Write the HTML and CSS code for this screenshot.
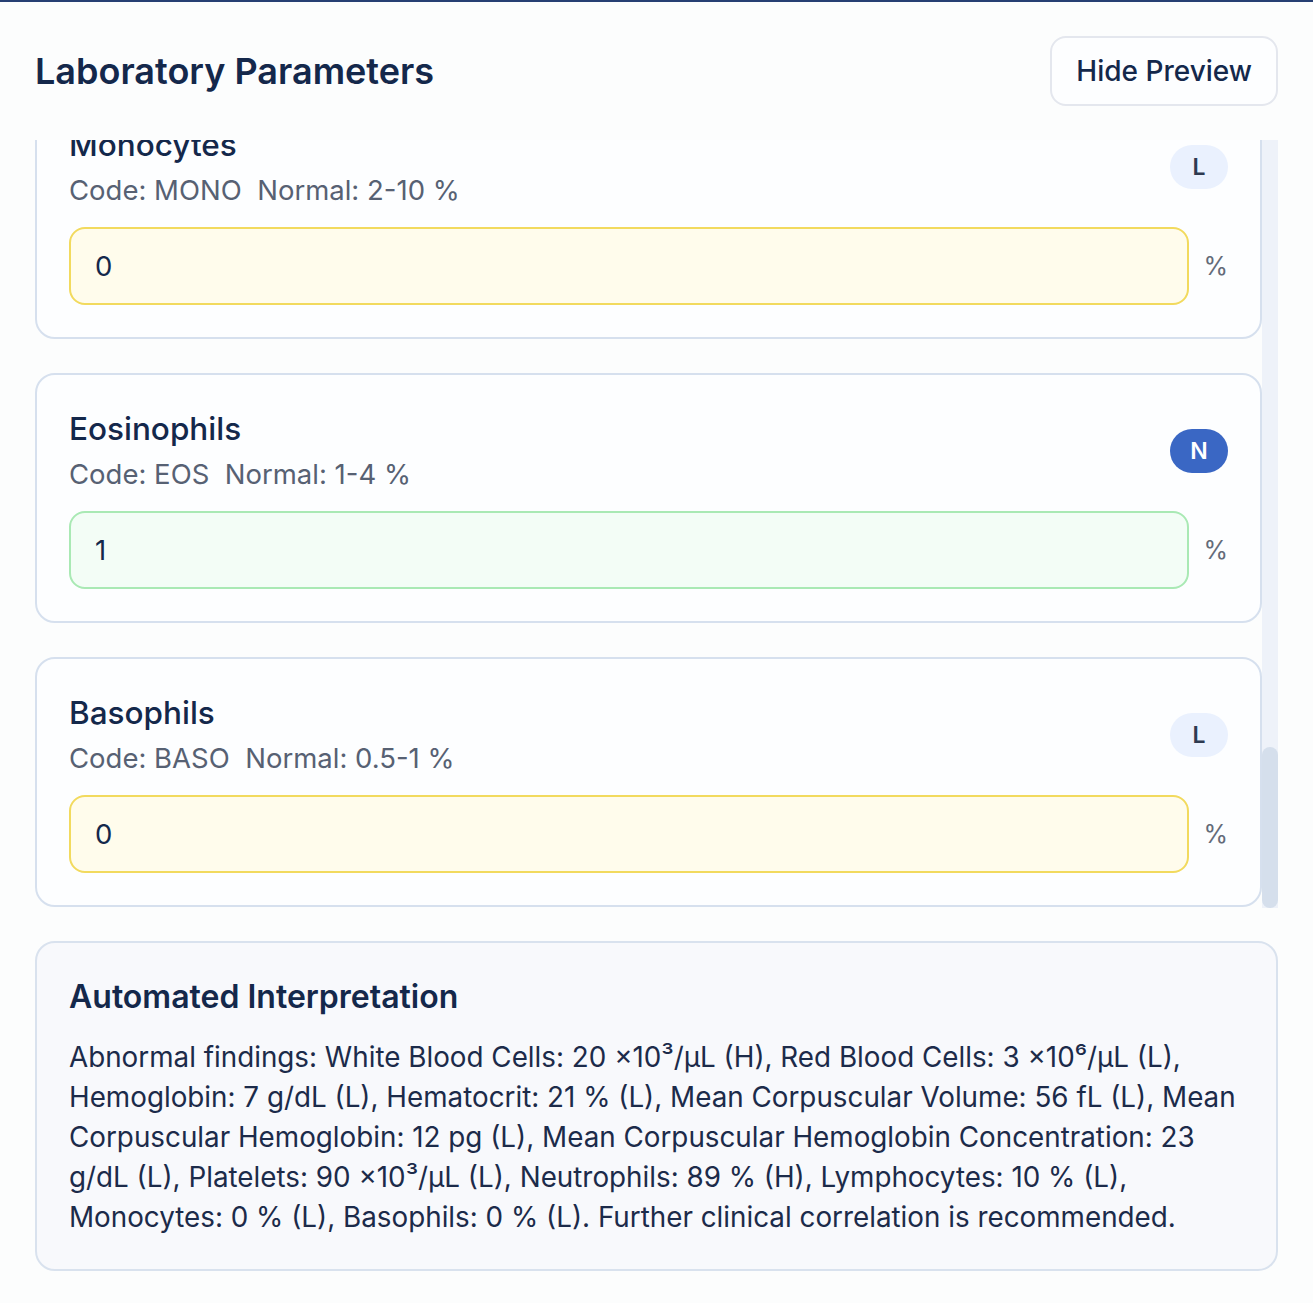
FILE: index.html
```html
<!DOCTYPE html>
<html lang="en">
<head>
<meta charset="utf-8">
<title>Laboratory Parameters</title>
<link rel="stylesheet" href="styles.css">
</head>
<body>
<div class="page">
  <header class="top">
    <h1 class="title">Laboratory Parameters</h1>
    <button class="btn" type="button">Hide Preview</button>
  </header>

  <div class="scroll-frame">
    <div class="scroller">
      <div class="list">
        <section class="card">
          <div class="card-head">
            <div><h2 class="name">White Blood Cells</h2><p class="meta">Code: WBC&nbsp;&nbsp;Normal: 4-11 ×10³/µL</p></div>
            <span class="badge badge-h">H</span>
          </div>
          <div class="field"><input class="inp inp-red" type="text" value="20"><span class="unit">×10³/µL</span></div>
        </section>
        <section class="card">
          <div class="card-head">
            <div><h2 class="name">Red Blood Cells</h2><p class="meta">Code: RBC&nbsp;&nbsp;Normal: 4.2-5.9 ×10⁶/µL</p></div>
            <span class="badge badge-l">L</span>
          </div>
          <div class="field"><input class="inp inp-yellow" type="text" value="3"><span class="unit">×10⁶/µL</span></div>
        </section>
        <section class="card">
          <div class="card-head">
            <div><h2 class="name">Hemoglobin</h2><p class="meta">Code: HGB&nbsp;&nbsp;Normal: 12-17 g/dL</p></div>
            <span class="badge badge-l">L</span>
          </div>
          <div class="field"><input class="inp inp-yellow" type="text" value="7"><span class="unit">g/dL</span></div>
        </section>
        <section class="card">
          <div class="card-head">
            <div><h2 class="name">Hematocrit</h2><p class="meta">Code: HCT&nbsp;&nbsp;Normal: 36-50 %</p></div>
            <span class="badge badge-l">L</span>
          </div>
          <div class="field"><input class="inp inp-yellow" type="text" value="21"><span class="unit">%</span></div>
        </section>
        <section class="card">
          <div class="card-head">
            <div><h2 class="name">Mean Corpuscular Volume</h2><p class="meta">Code: MCV&nbsp;&nbsp;Normal: 80-100 fL</p></div>
            <span class="badge badge-l">L</span>
          </div>
          <div class="field"><input class="inp inp-yellow" type="text" value="56"><span class="unit">fL</span></div>
        </section>
        <section class="card">
          <div class="card-head">
            <div><h2 class="name">Mean Corpuscular Hemoglobin</h2><p class="meta">Code: MCH&nbsp;&nbsp;Normal: 27-33 pg</p></div>
            <span class="badge badge-l">L</span>
          </div>
          <div class="field"><input class="inp inp-yellow" type="text" value="12"><span class="unit">pg</span></div>
        </section>
        <section class="card">
          <div class="card-head">
            <div><h2 class="name">Mean Corpuscular Hemoglobin Concentration</h2><p class="meta">Code: MCHC&nbsp;&nbsp;Normal: 32-36 g/dL</p></div>
            <span class="badge badge-l">L</span>
          </div>
          <div class="field"><input class="inp inp-yellow" type="text" value="23"><span class="unit">g/dL</span></div>
        </section>
        <section class="card">
          <div class="card-head">
            <div><h2 class="name">Platelets</h2><p class="meta">Code: PLT&nbsp;&nbsp;Normal: 150-400 ×10³/µL</p></div>
            <span class="badge badge-l">L</span>
          </div>
          <div class="field"><input class="inp inp-yellow" type="text" value="90"><span class="unit">×10³/µL</span></div>
        </section>
        <section class="card">
          <div class="card-head">
            <div><h2 class="name">Neutrophils</h2><p class="meta">Code: NEUT&nbsp;&nbsp;Normal: 40-75 %</p></div>
            <span class="badge badge-h">H</span>
          </div>
          <div class="field"><input class="inp inp-red" type="text" value="89"><span class="unit">%</span></div>
        </section>
        <section class="card">
          <div class="card-head">
            <div><h2 class="name">Lymphocytes</h2><p class="meta">Code: LYMPH&nbsp;&nbsp;Normal: 20-45 %</p></div>
            <span class="badge badge-l">L</span>
          </div>
          <div class="field"><input class="inp inp-yellow" type="text" value="10"><span class="unit">%</span></div>
        </section>
        <section class="card">
          <div class="card-head">
            <div><h2 class="name">Monocytes</h2><p class="meta">Code: MONO&nbsp;&nbsp;Normal: 2-10 %</p></div>
            <span class="badge badge-l">L</span>
          </div>
          <div class="field"><input class="inp inp-yellow" type="text" value="0"><span class="unit">%</span></div>
        </section>
        <section class="card">
          <div class="card-head">
            <div><h2 class="name">Eosinophils</h2><p class="meta">Code: EOS&nbsp;&nbsp;Normal: 1-4 %</p></div>
            <span class="badge badge-n">N</span>
          </div>
          <div class="field"><input class="inp inp-green" type="text" value="1"><span class="unit">%</span></div>
        </section>
        <section class="card">
          <div class="card-head">
            <div><h2 class="name">Basophils</h2><p class="meta">Code: BASO&nbsp;&nbsp;Normal: 0.5-1 %</p></div>
            <span class="badge badge-l">L</span>
          </div>
          <div class="field"><input class="inp inp-yellow" type="text" value="0"><span class="unit">%</span></div>
        </section>
      </div>
    </div>
    <div class="scrollbar" aria-hidden="true"><div class="thumb"></div></div>
  </div>

  <section class="interp">
    <h2 class="interp-title">Automated Interpretation</h2>
    <p class="interp-text">Abnormal findings: White Blood Cells: 20 ×10³/µL (H), Red Blood Cells: 3 ×10⁶/µL (L), Hemoglobin: 7 g/dL (L), Hematocrit: 21 % (L), Mean Corpuscular Volume: 56 fL (L), Mean Corpuscular Hemoglobin: 12 pg (L), Mean Corpuscular Hemoglobin Concentration: 23 g/dL (L), Platelets: 90 ×10³/µL (L), Neutrophils: 89 % (H), Lymphocytes: 10 % (L), Monocytes: 0 % (L), Basophils: 0 % (L). Further clinical correlation is recommended.</p>
  </section>
</div>
</body>
</html>
```

FILE: styles.css
```css
* { box-sizing: border-box; }

html, body {
  margin: 0;
  padding: 0;
  background: #fcfdfd;
}

body {
  font-family: Inter, "Noto Sans", "Liberation Sans", sans-serif;
  color: #14284b;
  border-top: 2px solid #263f73;
}

.page {
  padding: 0 35px 33px 35px;
}

.top {
  display: flex;
  align-items: center;
  justify-content: space-between;
  padding-top: 34px;
  padding-bottom: 34px;
}

.title {
  margin: 0;
  font-size: 36px;
  font-weight: 600;
  color: #14284b;
}

.btn {
  height: 70px;
  padding: 0 24px;
  border: 2px solid #e4e7ee;
  border-radius: 16px;
  background: #fdfeff;
  font-family: inherit;
  font-size: 28px;
  font-weight: 500;
  color: #14284b;
}

.scroll-frame {
  display: flex;
  height: 768px;
}

.scroller {
  flex: 1;
  min-width: 0;
  overflow-y: auto;
  display: flex;
  flex-direction: column-reverse;
  scrollbar-width: none;
}
.scroller::-webkit-scrollbar { display: none; }

.scrollbar {
  width: 16px;
  flex: none;
  background: #eef2f9;
  display: flex;
  flex-direction: column;
  justify-content: flex-end;
}
.thumb {
  height: 161px;
  border-radius: 8px;
  background: #d5dfec;
}

.list {
  display: flex;
  flex-direction: column;
  gap: 34px;
  padding-bottom: 1px;
}

.card {
  border: 2px solid #d6e0ee;
  border-radius: 20px;
  background: #fdfeff;
  padding: 32px;
}

.card-head {
  display: flex;
  align-items: center;
  justify-content: space-between;
  margin-bottom: 16px;
}

.name {
  margin: 0;
  font-size: 31.5px;
  line-height: 44px;
  font-weight: 500;
  color: #14284b;
}

.meta {
  margin: 2px 0 0 0;
  font-size: 27.5px;
  line-height: 42px;
  color: #576173;
}

.badge {
  display: inline-flex;
  align-items: center;
  justify-content: center;
  width: 58px;
  height: 44px;
  border-radius: 22px;
  font-size: 23px;
  font-weight: 600;
}
.badge-l { background: #eaf1fe; color: #2e3a50; }
.badge-n { background: #3a67c4; color: #ffffff; }
.badge-h { background: #fde8e8; color: #9b1c1c; }

.field {
  display: flex;
  align-items: center;
  gap: 18px;
}

.inp {
  flex: 1;
  min-width: 0;
  height: 78px;
  border: 2px solid;
  border-radius: 16px;
  padding: 0 24px;
  font-family: inherit;
  font-size: 27.5px;
  color: #14284b;
  outline: none;
}
.inp-yellow { border-color: #f2da5e; background: #fffcec; }
.inp-green { border-color: #a9e9b4; background: #f3fdf6; }
.inp-red { border-color: #f5b1b1; background: #fff4f4; }

.unit {
  flex: none;
  width: 21px;
  white-space: nowrap;
  direction: rtl;
  text-align: right;
  font-size: 25px;
  color: #646b79;
}

.interp {
  margin-top: 33px;
  border: 2px solid #d9e2ee;
  border-radius: 20px;
  background: #f8f9fc;
  padding: 32px;
}

.interp-title {
  margin: 0 0 18px 0;
  font-size: 32px;
  line-height: 44px;
  font-weight: 600;
  color: #14284b;
}

.interp-text {
  margin: 0;
  font-size: 27.8px;
  line-height: 40px;
  color: #1c2b4a;
}
```
